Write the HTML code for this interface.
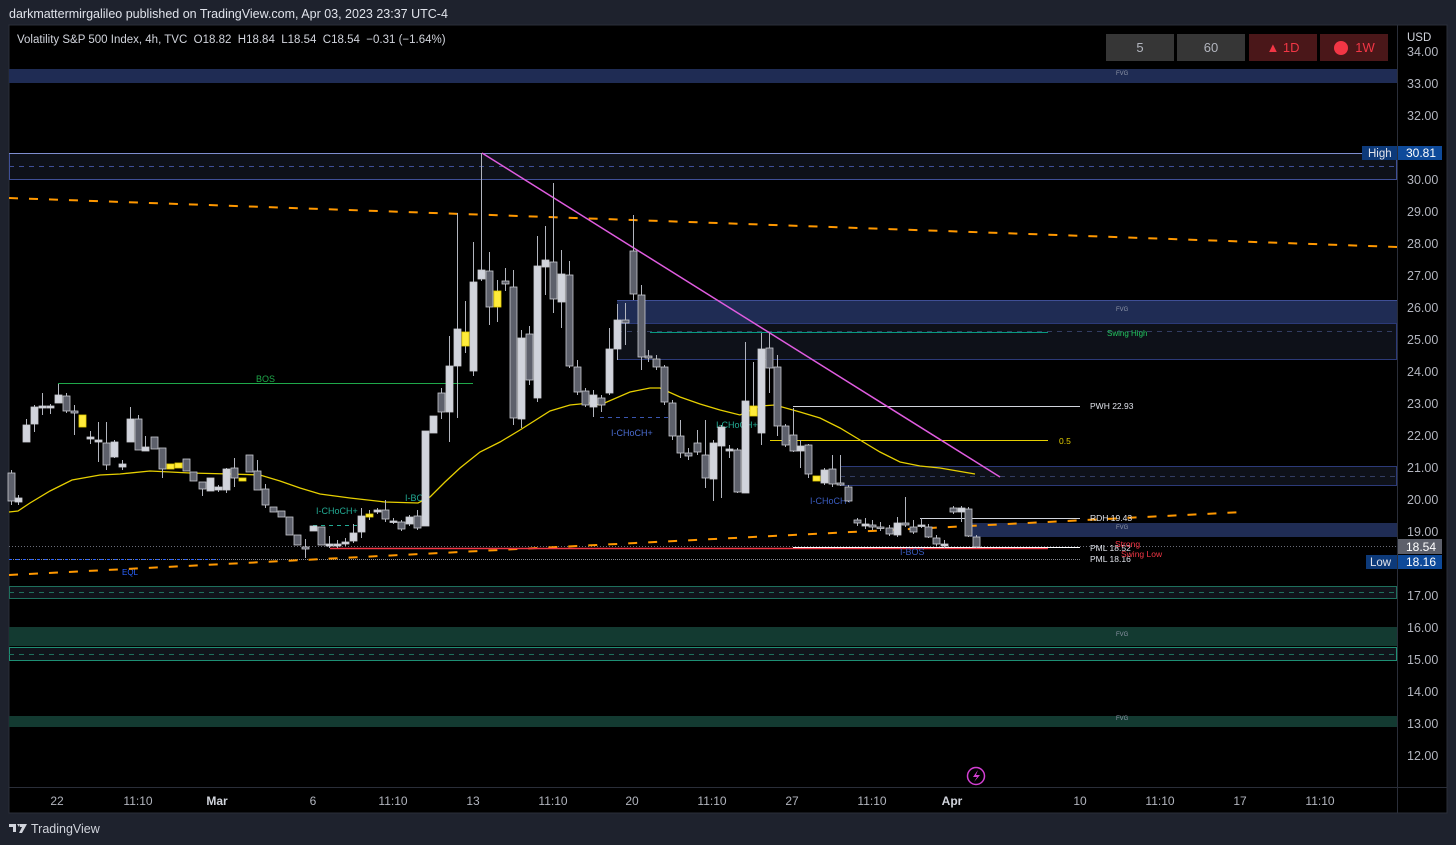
<!DOCTYPE html>
<html><head><meta charset="utf-8">
<style>
html,body{margin:0;padding:0;background:#1e222d;width:1456px;height:845px;overflow:hidden;font-family:"Liberation Sans",Arial,sans-serif;}
svg text{font-family:"Liberation Sans",Arial,sans-serif;}
</style></head><body>
<svg id="s" width="1456" height="845" xmlns="http://www.w3.org/2000/svg">
<rect width="1456" height="845" fill="#1e222d"/>
<text x="9" y="18" fill="#e0e3eb" font-size="12.5">darkmattermirgalileo published on TradingView.com, Apr 03, 2023 23:37 UTC-4</text>
<rect x="9" y="25" width="1438" height="788" fill="#000" stroke="#2a2e39"/>
<line x1="1397.5" y1="25" x2="1397.5" y2="813" stroke="#2a2e39"/>
<line x1="9" y1="787.5" x2="1447" y2="787.5" stroke="#2a2e39"/>
<rect x="9" y="69" width="1388" height="14" fill="#1f2c54"/>
<text x="1116" y="75" fill="#8f96a8" font-size="6">FVG</text>
<rect x="9.5" y="153.5" width="1387" height="26" fill="#0e1119" stroke="#3f4f96"/>
<line x1="9" y1="153.5" x2="1397" y2="153.5" stroke="#7f8ed0"/>
<line x1="9" y1="166.5" x2="1397" y2="166.5" stroke="#3f4f96" stroke-dasharray="5,5"/>
<rect x="617" y="300" width="780" height="23" fill="#1f2c54"/>
<rect x="617.5" y="323.5" width="779" height="36" fill="#0e1119" stroke="#2c3a78"/>
<line x1="617" y1="300.5" x2="1397" y2="300.5" stroke="#3f4f96"/>
<line x1="617" y1="331.5" x2="1397" y2="331.5" stroke="#333d62" stroke-dasharray="5,5"/>
<text x="1116" y="311" fill="#8f96a8" font-size="6">FVG</text>
<rect x="840.5" y="466.5" width="556" height="19" fill="#0e1119" stroke="#2c3a78"/>
<line x1="840" y1="476.5" x2="1397" y2="476.5" stroke="#333d62" stroke-dasharray="5,5"/>
<rect x="970" y="523" width="427" height="14" fill="#1f2c54"/>
<text x="1116" y="529" fill="#8f96a8" font-size="6">FVG</text>
<rect x="9.5" y="586.5" width="1387" height="12" fill="#10141b" stroke="#1e6f5c"/>
<line x1="9" y1="592.5" x2="1397" y2="592.5" stroke="#1e6f5c" stroke-dasharray="5,5"/>
<rect x="9" y="627" width="1388" height="19" fill="#133a31"/>
<text x="1116" y="636" fill="#8f96a8" font-size="6">FVG</text>
<rect x="9.5" y="647.5" width="1387" height="13" fill="#10141b" stroke="#1e8f74"/>
<line x1="9" y1="654.5" x2="1397" y2="654.5" stroke="#1e6f5c" stroke-dasharray="5,5"/>
<rect x="9" y="716" width="1388" height="11" fill="#133a31"/>
<text x="1116" y="720" fill="#8f96a8" font-size="6">FVG</text>
<line x1="9" y1="546.5" x2="1397" y2="546.5" stroke="#6a6d78" stroke-dasharray="1,2"/>
<line x1="9" y1="559.5" x2="1080" y2="559.5" stroke="#8a8d96" stroke-dasharray="1,1"/>
<line x1="9" y1="559.5" x2="220" y2="559.5" stroke="#2962ff" stroke-dasharray="3,4"/>
<text x="122" y="575" fill="#2962ff" font-size="8">EQL</text>
<line x1="9" y1="198" x2="1397" y2="247" stroke="#ff9800" stroke-width="2" stroke-dasharray="9,11"/>
<line x1="9" y1="575" x2="1243" y2="512" stroke="#ff9800" stroke-width="2" stroke-dasharray="9,11"/>
<line x1="58" y1="383.5" x2="473" y2="383.5" stroke="#1fa84a"/>
<text x="256" y="382" fill="#1fa84a" font-size="9">BOS</text>
<line x1="650" y1="332.5" x2="1048" y2="332.5" stroke="#089981"/>
<text x="1107" y="336" fill="#22c55e" font-size="8">Swing High</text>
<line x1="793" y1="406.5" x2="1080" y2="406.5" stroke="#d1d4dc"/>
<text x="1090" y="409" fill="#e0e3eb" font-size="8.5">PWH 22.93</text>
<line x1="770" y1="440.5" x2="1048" y2="440.5" stroke="#e6d000"/>
<text x="1059" y="444" fill="#e6d000" font-size="8.5">0.5</text>
<line x1="920" y1="518.5" x2="1080" y2="518.5" stroke="#d1d4dc"/>
<text x="1090" y="521" fill="#e0e3eb" font-size="8.5">RDH 19.43</text>
<line x1="330" y1="548.5" x2="1048" y2="548.5" stroke="#f23645" stroke-width="1.5"/>
<line x1="793" y1="547.5" x2="1080" y2="547.5" stroke="#ffffff"/>
<text x="1090" y="551" fill="#e0e3eb" font-size="8.5">PML 18.52</text>
<text x="1090" y="562" fill="#e0e3eb" font-size="8.5">PML 18.16</text>
<text x="1115" y="547" fill="#f23645" font-size="8.5">Strong</text>
<text x="1121" y="557" fill="#f23645" font-size="8.5">Swing Low</text>
<line x1="600" y1="417.5" x2="668" y2="417.5" stroke="#3a56b0" stroke-dasharray="4,4"/>
<text x="611" y="436" fill="#4a6cd0" font-size="9">I-CHoCH+</text>
<text x="716" y="428" fill="#22ab94" font-size="9">I-CHoCH+</text>
<text x="810" y="504" fill="#3a5cc0" font-size="9">I-CHoCH+</text>
<text x="316" y="514" fill="#22ab94" font-size="9">I-CHoCH+</text>
<line x1="313" y1="525.5" x2="360" y2="525.5" stroke="#22ab94" stroke-dasharray="4,4"/>
<text x="405" y="501" fill="#22ab94" font-size="9">I-BOS</text>
<text x="900" y="555" fill="#3a5cc0" font-size="9">I-BOS</text>
<polyline fill="none" stroke="#e6cf00" stroke-width="1.3" points="9,512 18,511 30,503 50,491 72,480 100,475 120,474 150,471 170,472 190,473 230,474 260,475 280,481 300,488 320,494 350,498 385,502 418,503 430,497 445,482 460,468 470,460 480,452 500,442 505,439 520,430 550,411 570,405 590,403 600,405 630,392 650,388 660,388 680,397 700,404 720,410 740,415 760,406 775,405 800,412 820,418 840,428 860,440 880,452 900,462 920,466 940,468 975,474"/>
<line x1="482" y1="153" x2="1000" y2="477" stroke="#e05ce0" stroke-width="1.5"/>
<g id="c"></g>
<text x="17" y="43" fill="#d1d4dc" font-size="11.5" style="white-space:pre" xml:space="preserve">Volatility S&amp;P 500 Index, 4h, TVC  O18.82  H18.84  L18.54  C18.54  −0.31 (−1.64%)</text>
<rect x="1106" y="34" width="68" height="27" fill="#363636"/>
<text x="1140" y="52" fill="#b2b5be" font-size="13" text-anchor="middle">5</text>
<rect x="1177" y="34" width="68" height="27" fill="#363636"/>
<text x="1211" y="52" fill="#b2b5be" font-size="13" text-anchor="middle">60</text>
<rect x="1249" y="34" width="68" height="27" fill="#4a1719"/>
<text x="1283" y="52" fill="#f23645" font-size="13" text-anchor="middle">▲ 1D</text>
<rect x="1320" y="34" width="68" height="27" fill="#4a1719"/>
<circle cx="1341" cy="48" r="7" fill="#f23645"/>
<text x="1365" y="52" fill="#f23645" font-size="13" text-anchor="middle">1W</text>
<g id="ax" fill="#b2b5be" font-size="12.5"></g>
<text x="1407" y="41" fill="#d1d4dc" font-size="11.5">USD</text>
<rect x="1362" y="146" width="35" height="14" fill="#0d3a7a"/>
<text x="1368" y="157" fill="#e0e3eb" font-size="11.5">High</text>
<rect x="1398" y="146" width="44" height="14" fill="#0e4a9a"/>
<text x="1406" y="157" fill="#fff" font-size="12">30.81</text>
<rect x="1398" y="539" width="44" height="15" fill="#5d606b"/>
<text x="1406" y="551" fill="#fff" font-size="12">18.54</text>
<rect x="1366" y="555" width="31" height="14" fill="#0d3a7a"/>
<text x="1370" y="566" fill="#e0e3eb" font-size="11.5">Low</text>
<rect x="1398" y="555" width="44" height="14" fill="#0e4a9a"/>
<text x="1406" y="566" fill="#fff" font-size="12">18.16</text>
<g fill="#b2b5be" font-size="12" text-anchor="middle">
<text x="57" y="805">22</text><text x="138" y="805">11:10</text><text x="217" y="805" fill="#d1d4dc" font-weight="bold">Mar</text><text x="313" y="805">6</text><text x="393" y="805">11:10</text><text x="473" y="805">13</text><text x="553" y="805">11:10</text><text x="632" y="805">20</text><text x="712" y="805">11:10</text><text x="792" y="805">27</text><text x="872" y="805">11:10</text><text x="952" y="805" fill="#d1d4dc" font-weight="bold">Apr</text><text x="1080" y="805">10</text><text x="1160" y="805">11:10</text><text x="1240" y="805">17</text><text x="1320" y="805">11:10</text>
</g>
<circle cx="976" cy="776" r="8.5" fill="none" stroke="#d33fd3" stroke-width="1.5"/>
<path d="M978 770 L973 777 L977 777 L974 782 L980 775 L976 775 Z" fill="#d33fd3"/>
<path d="M9 824 h7 v8 h-3 v-5 h-4z M17 824 h3 l-1 3 z" fill="#d1d4dc"/>
<path d="M20 824 h7 l-5 9 h-3 l3 -6 h-2z" fill="#d1d4dc"/>
<text x="31" y="833" fill="#d1d4dc" font-size="12.5">TradingView</text>
</svg>
<script>
var C=[[11,470,505,473,501,'g'],[18,495,505,498,502,'w'],[26,419,442,425,442,'w'],[34,405,432,407,424,'w'],[42,393,415,406,408,'w'],[50,404,414,406,408,'w'],[58,384,403,395,403,'w'],[66,393,413,396,411,'g'],[74,405,435,411,413,'g'],[82,415,427,415,427,'y'],[90,431,444,437,439,'w'],[98,422,462,440,442,'w'],[106,422,470,443,465,'g'],[114,440,458,442,457,'w'],[122,460,470,464,467,'w'],[130,407,442,419,442,'w'],[138,415,450,419,450,'g'],[145,436,451,447,451,'w'],[154,437,449,437,449,'g'],[162,455,478,448,469,'g'],[170,464,469,464,469,'y'],[178,463,468,463,468,'y'],[186,459,471,459,471,'g'],[193,472,481,472,481,'g'],[202,482,496,482,489,'g'],[210,478,491,478,491,'w'],[218,485,492,487,490,'w'],[226,468,493,469,490,'w'],[234,458,487,468,478,'g'],[242,478,481,478,481,'y'],[249,455,472,455,472,'g'],[257,460,490,471,490,'g'],[265,484,508,489,505,'g'],[273,507,512,507,512,'g'],[281,511,517,511,517,'g'],[289,517,535,517,535,'g'],[297,535,545,535,545,'g'],[305,539,558,547,549,'g'],[313,526,531,526,531,'w'],[321,527,545,527,545,'g'],[329,536,548,544,546,'w'],[337,540,548,544,546,'w'],[345,538,546,542,544,'w'],[353,524,543,533,541,'w'],[361,508,538,516,532,'w'],[369,510,520,514,517,'y'],[377,508,514,510,512,'w'],[385,500,522,510,519,'g'],[393,518,524,521,522,'w'],[401,520,531,522,529,'g'],[409,515,526,517,524,'w'],[417,510,530,516,528,'g'],[425,431,526,431,526,'w'],[433,416,433,416,433,'w'],[441,388,419,393,412,'g'],[449,336,442,366,412,'w'],[457,213,418,329,366,'w'],[465,301,353,332,346,'y'],[473,242,376,282,371,'w'],[481,153,281,270,279,'w'],[489,252,325,271,307,'g'],[497,280,322,291,307,'y'],[505,268,291,281,284,'g'],[513,270,425,287,418,'g'],[521,330,428,338,419,'w'],[529,326,385,334,380,'g'],[537,236,402,266,398,'w'],[545,226,295,260,267,'w'],[553,183,313,262,299,'g'],[561,250,328,274,302,'w'],[569,261,368,275,366,'g'],[577,360,395,367,392,'g'],[585,388,407,391,405,'g'],[593,390,417,395,407,'w'],[601,395,412,398,405,'g'],[609,328,395,349,393,'w'],[617,304,360,320,349,'w'],[625,303,345,320,323,'g'],[633,215,300,251,294,'g'],[641,285,370,295,357,'g'],[648,350,362,356,358,'g'],[656,355,370,359,367,'g'],[664,365,405,367,402,'g'],[672,400,440,403,436,'g'],[680,420,458,436,453,'g'],[688,448,460,453,456,'g'],[697,430,455,443,452,'g'],[705,420,488,455,478,'g'],[713,440,501,443,479,'w'],[721,425,498,427,446,'w'],[729,445,458,449,451,'w'],[737,448,493,450,492,'g'],[745,342,493,401,493,'w'],[753,362,416,406,416,'y'],[761,333,445,349,433,'w'],[769,333,393,348,368,'g'],[777,355,436,367,426,'g'],[785,424,447,426,445,'g'],[793,408,452,435,451,'g'],[800,440,468,446,451,'w'],[808,444,478,445,474,'g'],[816,476,481,476,481,'y'],[824,468,485,470,483,'w'],[832,455,487,469,484,'g'],[840,455,486,483,485,'g'],[848,485,502,487,501,'g'],[857,518,526,520,523,'g'],[865,518,529,524,526,'w'],[872,520,530,525,527,'g'],[880,522,531,527,528,'g'],[889,525,536,528,534,'g'],[897,517,537,523,535,'w'],[905,497,527,523,525,'g'],[913,520,534,527,532,'g'],[921,518,528,525,526,'w'],[928,524,538,527,537,'g'],[936,535,546,538,544,'g'],[944,540,548,544,546,'w'],[953,506,514,508,512,'g'],[961,506,522,508,512,'w'],[968,507,537,509,536,'g'],[976,535,548,537,547,'g']];
var h='';C.forEach(function(c){var x=c[0],col=c[5];var f=col=='w'?'#d1d4dc':col=='y'?'#ffeb3b':'#5d606b';var s=col=='y'?'#e6cf00':'#c8cad0';
h+='<line x1="'+(x+0.5)+'" y1="'+c[1]+'" x2="'+(x+0.5)+'" y2="'+c[2]+'" stroke="#b2b5be" stroke-width="1"/>';
var hh=Math.max(1.5,c[4]-c[3]);h+='<rect x="'+(x-3)+'" y="'+c[3]+'" width="7" height="'+hh+'" fill="'+f+'" stroke="'+s+'" stroke-width="0.8"/>';});
document.getElementById('c').innerHTML=h;
var a='';for(var p=34;p>=12;p--){if(p==31)continue;var y=180+(30-p)*32+4;a+='<text x="1407" y="'+y+'">'+p+'.00</text>';}
document.getElementById('ax').innerHTML=a;
</script>
</body></html>
